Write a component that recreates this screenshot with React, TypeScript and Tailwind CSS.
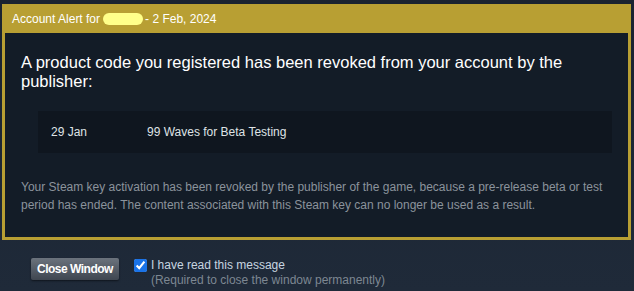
export default function App() {
  return (
    <div className="w-[634px] h-[291px] bg-gradient-to-b from-[#1a2330] to-[#1f2a39] pt-[4px] pl-[2px] pr-[3px] font-['Liberation_Sans',Arial,sans-serif] overflow-hidden">
      {/* alert panel */}
      <div className="border-x-[3px] border-b-[3px] border-[#b89f33] bg-[#131c27]">
        <div className="bg-[#b89f33] h-[29px] flex items-center pl-[7px] text-[12px] text-white">
          Account Alert for
          <span className="inline-block w-[40px] h-[12px] rounded-full bg-[#ffff8a] ml-[3px]" />
          <span className="ml-[2px]">- 2 Feb, 2024</span>
        </div>
        <div className="pl-[16px] pr-[10px] pt-[20px] pb-[23px]">
          <p className="text-[16.5px] leading-[19px] text-white">
            A product code you registered has been revoked from your account by the publisher:
          </p>
          <div className="mt-[20px] ml-[17px] mr-[6px] h-[42px] bg-[#0f161f] flex items-center pl-[13px] text-[12px] text-[#dfe3e6]">
            <span className="w-[96px]">29 Jan</span>
            <span>99 Waves for Beta Testing</span>
          </div>
          <p className="mt-[25px] text-[12px] leading-[18px] text-[#8b939c]">
            Your Steam key activation has been revoked by the publisher of the game, because a pre-release beta or test period has ended. The content associated with this Steam key can no longer be used as a result.
          </p>
        </div>
      </div>

      {/* footer */}
      <div className="flex items-start pl-[29px] pt-[18px]">
        <button className="h-[22px] px-[6px] rounded-[2px] bg-gradient-to-b from-[#6b737d] to-[#3f4650] text-white text-[12px] font-bold tracking-[-0.5px] shadow-[0_1px_2px_rgba(0,0,0,0.5)]">
          Close Window
        </button>
        <label className="ml-[15px] flex items-start gap-[4px]">
          <input type="checkbox" defaultChecked className="w-[13px] h-[13px] m-0 mt-[1px] accent-[#1a73e8]" />
          <span className="flex flex-col text-[12px] leading-[15px]">
            <span className="text-[#c7d5e0]">I have read this message</span>
            <span className="text-[#7d8792]">(Required to close the window permanently)</span>
          </span>
        </label>
      </div>
    </div>
  );
}
